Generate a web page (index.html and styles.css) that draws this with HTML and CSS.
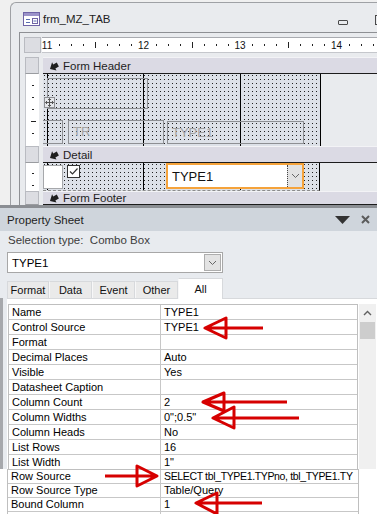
FILE: index.html
```html
<!DOCTYPE html>
<html lang="en">
<head>
    <meta charset="UTF-8">
    <meta name="viewport" content="width=device-width, initial-scale=1.0">
    <title>frm_MZ_TAB - Property Sheet</title>
    <link rel="stylesheet" href="styles.css">
</head>
<body>
    <div class="doc-window">
        <div class="title-bar">
            <svg class="form-icon" width="17" height="14" viewBox="0 0 17 14">
                <rect x="0.5" y="0.5" width="16" height="13" fill="#fff" stroke="#6f64a6"/>
                <rect x="1" y="1" width="15" height="3" fill="#9b93c9"/>
                <path d="M3 7.5h4M3 10.5h4" stroke="#5a6fb0"/>
                <rect x="9.5" y="6.5" width="5" height="5" fill="none" stroke="#6f64a6"/>
                <path d="M10.5 9h3" stroke="#5a6fb0"/>
            </svg>
            <span class="doc-title">frm_MZ_TAB</span>
            <span class="win-btn win-min"></span>
            <span class="win-btn win-max"></span>
        </div>

        <div class="designer">
            <div class="ruler-corner"></div>
            <div class="h-ruler">
                <svg width="335" height="14" viewBox="0 0 335 14">
                    <path class="ticks" d="M17.5 6v2M29.5 6v2M41.5 6v2M65.5 6v2M77.5 6v2M89.5 6v2M114.5 6v2M126.5 6v2M138.5 6v2M162.5 6v2M174.5 6v2M186.5 6v2M210.5 6v2M222.5 6v2M234.5 6v2M258.5 6v2M270.5 6v2M282.5 6v2M307.5 6v2M319.5 6v2M331.5 6v2M53.5 4v6M150.5 4v6M246.5 4v6"/>
                    <text x="5" y="11">11</text>
                    <text x="101.5" y="11">12</text>
                    <text x="198" y="11">13</text>
                    <text x="294.5" y="11">14</text>
                </svg>
            </div>

            <!-- Form Header -->
            <div class="ruler-box"></div>
            <div class="section-bar">
                <svg class="sect-icon" width="11" height="10" viewBox="0 0 11 10">
                    <path d="M1 6 L6 1 V3.5 H10 V8 H6 V10.5 Z" fill="#1f1f1f" transform="rotate(-28 5.5 5)"/>
                </svg>
                Form Header
            </div>
            <div class="v-ruler">
                <svg width="14" height="72" viewBox="0 0 14 72">
                    <path class="ticks" d="M6 11.5h2M6 23.5h2M6 35.5h2M5 47.5h5M6 59.5h2"/>
                </svg>
            </div>
            <div class="section-body">
                <div class="form-area">
                    <div class="ctl ctl-box"></div>
                    <div class="move-handle">
                        <svg width="9" height="9" viewBox="0 0 9 9">
                            <path d="M4.5 0.5v8M0.5 4.5h8M3 2l1.5-1.5L6 2M3 7l1.5 1.5L6 7M2 3L0.5 4.5 2 6M7 3l1.5 1.5L7 6" fill="none" stroke="#555"/>
                        </svg>
                    </div>
                    <div class="ctl ctl-stub"></div>
                    <div class="ctl ctl-label">TR</div>
                    <div class="ctl ctl-text">TYPE1</div>
                </div>
            </div>

            <!-- Detail -->
            <div class="ruler-box"></div>
            <div class="section-bar">
                <svg class="sect-icon" width="11" height="10" viewBox="0 0 11 10">
                    <path d="M1 6 L6 1 V3.5 H10 V8 H6 V10.5 Z" fill="#1f1f1f" transform="rotate(-28 5.5 5)"/>
                </svg>
                Detail
            </div>
            <div class="v-ruler">
                <svg width="14" height="28" viewBox="0 0 14 28">
                    <path class="ticks" d="M6 10.5h2M6 22.5h2"/>
                </svg>
            </div>
            <div class="section-body">
                <div class="form-area detail-area">
                    <div class="ctl white-stub"></div>
                    <div class="check-box">
                        <svg width="11" height="11" viewBox="0 0 11 11">
                            <path d="M2 5.5l2.5 2.5 5-5.5" fill="none" stroke="#333" stroke-width="1.2"/>
                        </svg>
                    </div>
                    <div class="combo-selected">
                        <span>TYPE1</span>
                        <span class="combo-btn">
                            <svg width="9" height="6" viewBox="0 0 9 6"><path d="M1 1l3.5 3.5L8 1" fill="none" stroke="#666"/></svg>
                        </span>
                    </div>
                </div>
            </div>

            <!-- Form Footer -->
            <div class="ruler-box"></div>
            <div class="section-bar">
                <svg class="sect-icon" width="11" height="10" viewBox="0 0 11 10">
                    <path d="M1 6 L6 1 V3.5 H10 V8 H6 V10.5 Z" fill="#1f1f1f" transform="rotate(-28 5.5 5)"/>
                </svg>
                Form Footer
            </div>
        </div>
    </div>

    <div class="prop-sheet">
        <div class="ps-header">
            <span class="ps-title">Property Sheet</span>
            <svg class="ps-menu" width="15" height="8" viewBox="0 0 15 8"><path d="M0 0h15L7.5 8z" fill="#333"/></svg>
            <svg class="ps-close" width="9" height="9" viewBox="0 0 9 9"><path d="M1 1l7 7M8 1L1 8" stroke="#5c5c5c" stroke-width="2"/></svg>
        </div>
        <div class="ps-selection">Selection type:&nbsp;&nbsp;Combo Box</div>
        <div class="ps-combo">
            <span>TYPE1</span>
            <span class="ps-combo-btn">
                <svg width="9" height="6" viewBox="0 0 9 6"><path d="M1 1l3.5 3.5L8 1" fill="none" stroke="#666"/></svg>
            </span>
        </div>
        <div class="ps-tabs">
            <span class="ps-tab">Format</span>
            <span class="ps-tab">Data</span>
            <span class="ps-tab">Event</span>
            <span class="ps-tab">Other</span>
            <span class="ps-tab active">All</span>
        </div>
        <div class="ps-page">
            <div class="ps-panel">
                <div class="prop-table">
                    <div class="prop-row"><span class="prop-name">Name</span><span class="prop-value">TYPE1</span></div>
                    <div class="prop-row"><span class="prop-name">Control Source</span><span class="prop-value">TYPE1</span></div>
                    <div class="prop-row"><span class="prop-name">Format</span><span class="prop-value"></span></div>
                    <div class="prop-row"><span class="prop-name">Decimal Places</span><span class="prop-value">Auto</span></div>
                    <div class="prop-row"><span class="prop-name">Visible</span><span class="prop-value">Yes</span></div>
                    <div class="prop-row"><span class="prop-name">Datasheet Caption</span><span class="prop-value"></span></div>
                    <div class="prop-row"><span class="prop-name">Column Count</span><span class="prop-value">2</span></div>
                    <div class="prop-row"><span class="prop-name">Column Widths</span><span class="prop-value">0";0.5"</span></div>
                    <div class="prop-row"><span class="prop-name">Column Heads</span><span class="prop-value">No</span></div>
                    <div class="prop-row"><span class="prop-name">List Rows</span><span class="prop-value">16</span></div>
                    <div class="prop-row"><span class="prop-name">List Width</span><span class="prop-value">1"</span></div>
                </div>
                <div class="scrollbar">
                    <svg class="scroll-up" width="9" height="6" viewBox="0 0 9 6"><path d="M1 5l3.5-3.5L8 5" fill="none" stroke="#606060" stroke-width="1.4"/></svg>
                    <div class="scroll-thumb"></div>
                </div>
            </div>
        </div>
        <div class="snippet">
            <div class="prop-table snip-table">
                <div class="prop-row"><span class="prop-name">Row Source</span><span class="prop-value sql-value">SELECT tbl_TYPE1.TYPno, tbl_TYPE1.TY</span></div>
                <div class="prop-row"><span class="prop-name">Row Source Type</span><span class="prop-value">Table/Query</span></div>
                <div class="prop-row"><span class="prop-name">Bound Column</span><span class="prop-value">1</span></div>
                <div class="prop-row"><span class="prop-name"></span><span class="prop-value"></span></div>
            </div>
        </div>
    </div>

    <svg class="annotations" width="377" height="514" viewBox="0 0 377 514">
        <path d="M205 328 L226 318 L226 338 Z M207 328 H263"/>
        <path d="M203 402 L224 393 L224 411 Z M205 402 H287"/>
        <path d="M213 418 L234 407 L234 428 Z M215 418 H299"/>
        <path d="M157 476 L137 466 L137 486 Z M105 476 H155"/>
        <path d="M196 503 L217 493 L217 514 Z M198 503 H262"/>
    </svg>
</body>
</html>
```

FILE: styles.css
```css
body {
    margin: 0;
    width: 377px;
    height: 514px;
    overflow: hidden;
    position: relative;
    background-color: #f0f0f0;
    font-family: "Liberation Sans", Arial, sans-serif;
    color: #000;
}

/* ---- form design window ---- */

.doc-window {
    margin: 2px 0 0 10px;
    height: 202px;
    border-top: 1px solid #9fa1a5;
    border-left: 1px solid #9fa1a5;
    border-top-left-radius: 6px;
    background-color: #e9ebee;
}

.title-bar {
    display: flex;
    align-items: center;
    height: 29px;
    box-sizing: border-box;
    padding: 3px 0 0 12px;
}

.doc-title {
    margin-left: 3px;
    font-size: 11.5px;
    color: #1e1e1e;
    white-space: nowrap;
}

.win-btn {
    flex-shrink: 0;
    box-sizing: border-box;
    border: 1px solid #4a4a4a;
}

.win-min {
    margin-left: auto;
    width: 10px;
    height: 5px;
    border-radius: 1px;
    margin-top: 6px;
}

.win-max {
    margin-left: 27px;
    margin-right: -8px;
    width: 10px;
    height: 10px;
    margin-top: 1px;
}

.designer {
    margin-left: 8px;
    border-top: 1px solid #8e9094;
    border-left: 1px solid #8e9094;
    padding: 4px 0 0 4px;
    display: grid;
    grid-template-columns: 17px 1fr;
    grid-template-rows: 20px 17px 72px 17px 28px 14px;
    column-gap: 2px;
    background-color: #e9ebee;
}

.ruler-corner {
    height: 16px;
    box-sizing: border-box;
    border: 1px solid #b9bbc1;
    background-color: #dcdde2;
}

.h-ruler {
    height: 16px;
    margin-left: -1px;
    box-sizing: border-box;
    border-top: 1px solid #a9abb0;
    border-bottom: 1px solid #c5c7cc;
    background-color: #fff;
    overflow: hidden;
}

.h-ruler svg,
.v-ruler svg {
    display: block;
}

.ticks {
    stroke: #222;
    stroke-width: 1;
    shape-rendering: crispEdges;
}

.h-ruler text {
    font-family: "Liberation Sans", Arial, sans-serif;
    font-size: 10px;
    text-anchor: middle;
    fill: #111;
}

.ruler-box {
    width: 14px;
    margin-left: 1px;
    box-sizing: border-box;
    border: 1px solid #b9bbc1;
    border-bottom-color: #9a9ca0;
    background-color: #dcdde2;
}

.v-ruler {
    width: 14px;
    margin-left: 1px;
    background-color: #fff;
    border-left: 1px solid #c5c7cc;
    box-sizing: border-box;
}

.section-bar {
    display: flex;
    align-items: center;
    box-sizing: border-box;
    padding-left: 5px;
    border-top: 1px solid #f3f3f6;
    border-bottom: 1px solid #1c1c1c;
    background-color: #dbdae4;
    font-size: 11.5px;
    color: #1e1e1e;
    white-space: nowrap;
}

.sect-icon {
    margin-right: 4px;
}

.section-body {
    display: flex;
    background-color: #e9ebee;
}

.form-area {
    position: relative;
    width: 277px;
    border-right: 1px solid #000;
    background-color: #dde1e8;
    background-image:
        linear-gradient(#000, #000),
        linear-gradient(#000, #000),
        linear-gradient(#000, #000),
        conic-gradient(at 1px 1px, transparent 75%, #222 0);
    background-size: 1px 100%, 1px 100%, 1px 100%, 4px 4px;
    background-position: 4px 0, 100px 0, 197px 0, 1px 1px;
    background-repeat: no-repeat, no-repeat, no-repeat, repeat;
}

.detail-area {
    box-sizing: border-box;
    border-bottom: 1px dashed #8c8c8c;
}

/* controls placed on the design canvas */
.ctl {
    position: absolute;
    box-sizing: border-box;
    border: 1px solid #8d8f93;
}

.ctl-box {
    left: 4px;
    top: 4px;
    width: 101px;
    height: 31px;
}

.move-handle {
    position: absolute;
    left: 1px;
    top: 23px;
    width: 11px;
    height: 11px;
    box-sizing: border-box;
    border: 1px solid #8d8f93;
    background-color: #e4e6ea;
    display: flex;
    align-items: center;
    justify-content: center;
}

.ctl-stub {
    left: 0;
    top: 46px;
    width: 20px;
    height: 24px;
    border-left: none;
}

.ctl-label,
.ctl-text {
    top: 46px;
    height: 24px;
    padding-left: 4px;
    font-size: 13px;
    line-height: 22px;
    color: #a3a3a3;
}

.ctl-label {
    left: 25px;
    width: 96px;
}

.ctl-text {
    left: 124px;
    width: 137px;
    top: 47px;
    height: 23px;
}

.white-stub {
    left: 0;
    top: 2px;
    width: 20px;
    height: 24px;
    background-color: #fff;
    border-color: #a6a8ab;
}

.check-box {
    position: absolute;
    left: 24px;
    top: 2px;
    width: 13px;
    height: 13px;
    box-sizing: border-box;
    border: 1px solid #333;
    background-color: #fff;
}

.check-box svg {
    display: block;
}

.combo-selected {
    position: absolute;
    left: 123px;
    top: 0;
    width: 138px;
    height: 26px;
    box-sizing: border-box;
    border: 2px solid #f5a33b;
    background-color: #fff;
    display: flex;
    align-items: center;
    padding-left: 4px;
    font-size: 13px;
    color: #111;
}

.combo-btn {
    margin-left: auto;
    width: 15px;
    height: 100%;
    box-sizing: border-box;
    border-left: 1px dotted #444;
    background-color: #e2e2e2;
    display: flex;
    align-items: center;
    justify-content: center;
}

/* ---- property sheet ---- */

.prop-sheet {
    border-top: 3px solid #8b8e93;
    background-color: #e8ebef;
    height: 306px;
}

.ps-header {
    display: flex;
    align-items: center;
    height: 23px;
    padding: 0 7px;
    background-color: #cfd5dc;
}

.ps-title {
    font-size: 11.5px;
    color: #1e1e1e;
}

.ps-menu {
    margin-left: auto;
}

.ps-close {
    margin-left: 11px;
}

.ps-selection {
    height: 20px;
    line-height: 19px;
    padding-left: 8px;
    font-size: 11.5px;
    color: #3c3c3c;
    white-space: nowrap;
}

.ps-combo {
    display: flex;
    align-items: center;
    margin: 1px 0 0 7px;
    width: 216px;
    height: 21px;
    box-sizing: border-box;
    border: 1px solid #a7a7a7;
    background-color: #fff;
    padding-left: 4px;
    font-size: 11.5px;
}

.ps-combo-btn {
    margin: 0 1px 0 auto;
    width: 17px;
    height: 17px;
    box-sizing: border-box;
    border: 1px solid #adadad;
    background-color: #e3e3e3;
    display: flex;
    align-items: center;
    justify-content: center;
}

.ps-tabs {
    display: flex;
    align-items: flex-end;
    margin: 5px 0 0 7px;
    height: 20px;
}

.ps-tab {
    width: 43px;
    height: 17px;
    box-sizing: border-box;
    border: 1px solid #d7d9dc;
    border-bottom: none;
    border-left-color: #f7f7f8;
    background-color: #eaeaea;
    font-size: 11px;
    line-height: 17px;
    text-align: center;
    color: #111;
}

.ps-tab:first-child {
    width: 42px;
    border-left-color: #d7d9dc;
}

.ps-tab.active {
    width: 45px;
    height: 21px;
    margin-bottom: -1px;
    line-height: 21px;
    background-color: #fff;
    position: relative;
}

.ps-page {
    height: 171px;
    box-sizing: border-box;
    border-left: 3px solid #a6a8ac;
    padding-left: 4px;
    overflow: hidden;
}

.ps-panel {
    display: flex;
    align-items: flex-start;
    height: 100%;
    box-sizing: border-box;
    border-top: 1px solid #d7d9dc;
    background-color: #fff;
    padding-top: 5px;
}

.prop-table {
    width: 348px;
    margin-left: 1px;
    border: 1px solid #bfbfbf;
    border-bottom: none;
    font-size: 11px;
    flex-shrink: 0;
}

.prop-row {
    display: grid;
    grid-template-columns: 152px 1fr;
    height: 15px;
    box-sizing: border-box;
    border-bottom: 1px solid #c7c7c7;
    line-height: 14px;
}

.prop-name {
    padding-left: 3px;
    border-right: 1px solid #c7c7c7;
    white-space: nowrap;
}

.prop-value {
    padding-left: 3px;
    white-space: nowrap;
    overflow: hidden;
}

.scrollbar {
    margin-left: 1px;
    width: 17px;
    height: 200px;
    background-color: #f0f0f0;
    display: flex;
    flex-direction: column;
    align-items: center;
}

.scroll-up {
    margin-top: 6px;
}

.scroll-thumb {
    margin-top: 6px;
    width: 15px;
    height: 17px;
    background-color: #cdcdcd;
}

.snippet {
    background-color: #fff;
    padding-left: 7px;
    height: 45px;
    overflow: hidden;
}

.snip-table {
    width: 350px;
    margin-left: 0;
}

.snip-table .prop-row {
    grid-template-columns: 153px 1fr;
    height: 14px;
    line-height: 13px;
}

.sql-value {
    font-size: 10.5px;
    letter-spacing: -0.35px;
}

/* red arrows pasted over the screenshot */
.annotations {
    position: absolute;
    left: 0;
    top: 0;
    pointer-events: none;
}

.annotations path {
    fill: none;
    stroke: #d60000;
    stroke-width: 3;
    stroke-linejoin: round;
}
```
